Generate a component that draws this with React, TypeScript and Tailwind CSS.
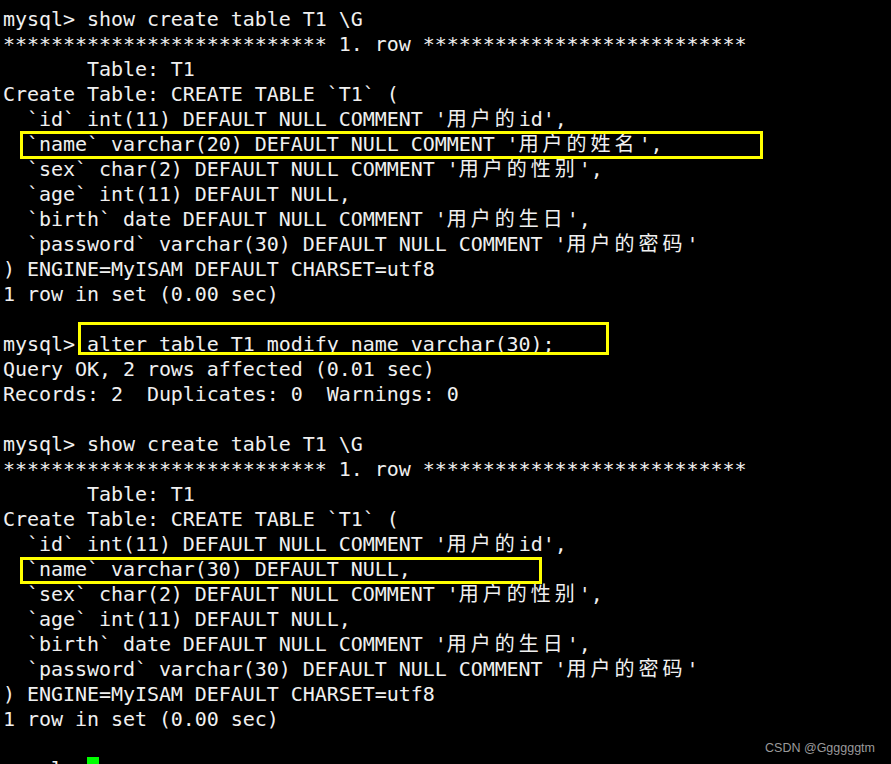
import React from 'react';

const lines = [
  'mysql> show create table T1 \\G',
  '*************************** 1. row ***************************',
  '       Table: T1',
  'Create Table: CREATE TABLE `T1` (',
  "  `id` int(11) DEFAULT NULL COMMENT '用户的id',",
  "  `name` varchar(20) DEFAULT NULL COMMENT '用户的姓名',",
  "  `sex` char(2) DEFAULT NULL COMMENT '用户的性别',",
  '  `age` int(11) DEFAULT NULL,',
  "  `birth` date DEFAULT NULL COMMENT '用户的生日',",
  "  `password` varchar(30) DEFAULT NULL COMMENT '用户的密码'",
  ') ENGINE=MyISAM DEFAULT CHARSET=utf8',
  '1 row in set (0.00 sec)',
  '',
  'mysql> alter table T1 modify name varchar(30);',
  'Query OK, 2 rows affected (0.01 sec)',
  'Records: 2  Duplicates: 0  Warnings: 0',
  '',
  'mysql> show create table T1 \\G',
  '*************************** 1. row ***************************',
  '       Table: T1',
  'Create Table: CREATE TABLE `T1` (',
  "  `id` int(11) DEFAULT NULL COMMENT '用户的id',",
  '  `name` varchar(30) DEFAULT NULL,',
  "  `sex` char(2) DEFAULT NULL COMMENT '用户的性别',",
  '  `age` int(11) DEFAULT NULL,',
  "  `birth` date DEFAULT NULL COMMENT '用户的生日',",
  "  `password` varchar(30) DEFAULT NULL COMMENT '用户的密码'",
  ') ENGINE=MyISAM DEFAULT CHARSET=utf8',
  '1 row in set (0.00 sec)',
  '',
];

// CJK chars take two terminal cells (24px), so pad them with letter spacing
const Line = ({ text }: { text: string }) => {
  const parts = text.split(/([\u4e00-\u9fff]+)/);
  return (
    <div className="h-[25px] whitespace-pre">
      {parts.map((p, i) =>
        /[\u4e00-\u9fff]/.test(p) ? (
          <span key={i} className="tracking-[4px]">
            {p}
          </span>
        ) : (
          <span key={i}>{p}</span>
        ),
      )}
    </div>
  );
};

export default function App() {
  return (
    <div className="relative h-[764px] w-[891px] overflow-hidden bg-black">
      <div className="pl-[3px] pt-[7px] font-['DejaVu_Sans_Mono','Noto_Sans_CJK_SC',monospace] text-[20px] leading-[25px] tracking-[-0.05px] text-[#f0f0f0]">
        {lines.map((l, i) => (
          <Line key={i} text={l} />
        ))}
        <div className="flex h-[25px] items-center whitespace-pre">
          <span>mysql&gt; </span>
          <span className="h-[25px] w-[12px] bg-[#00ff00]" />
        </div>
      </div>

      <div className="absolute left-[20px] top-[131px] h-[28px] w-[743px] border-[3px] border-[#ffff00]" />
      <div className="absolute left-[78px] top-[322px] h-[33px] w-[531px] border-[3px] border-[#ffff00]" />
      <div className="absolute left-[20px] top-[557px] h-[27px] w-[522px] border-[3px] border-[#ffff00]" />

      <div className="absolute right-[16px] top-[739px] font-['Liberation_Sans',sans-serif] text-[12.5px] text-[#9a9a9a]">
        CSDN @Ggggggtm
      </div>
    </div>
  );
}
